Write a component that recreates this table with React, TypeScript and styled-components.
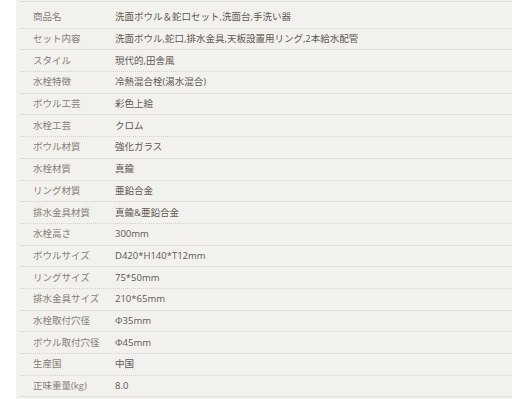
import React from "react";
import styled, { createGlobalStyle } from "styled-components";

const specs: [string, string][] = [
  ["商品名", "洗面ボウル＆蛇口セット,洗面台,手洗い器"],
  ["セット内容", "洗面ボウル,蛇口,排水金具,天板設置用リング,2本給水配管"],
  ["スタイル", "現代的,田舎風"],
  ["水栓特徴", "冷熱混合栓(湯水混合)"],
  ["ボウル工芸", "彩色上絵"],
  ["水栓工芸", "クロム"],
  ["ボウル材質", "強化ガラス"],
  ["水栓材質", "真鍮"],
  ["リング材質", "亜鉛合金"],
  ["排水金具材質", "真鍮&亜鉛合金"],
  ["水栓高さ", "300mm"],
  ["ボウルサイズ", "D420*H140*T12mm"],
  ["リングサイズ", "75*50mm"],
  ["排水金具サイズ", "210*65mm"],
  ["水栓取付穴径", "Φ35mm"],
  ["ボウル取付穴径", "Φ45mm"],
  ["生産国", "中国"],
  ["正味重量(kg)", "8.0"],
];

const GlobalStyle = createGlobalStyle`
  html, body {
    margin: 0;
    padding: 0;
    background: #ffffff;
  }
  body {
    font-family: "Open Sans", "Noto Sans CJK JP", sans-serif;
  }
`;

const Page = styled.div`
  height: 399px;
  overflow: hidden;
  padding-left: 16px;
`;

const Panel = styled.div`
  background: #f3f1ed;
  height: 100%;
  padding: 1px 0 0 4px;
`;

const SpecList = styled.dl`
  margin: 0;
  padding-top: 5px;
  border-top: 1px dotted #d3cfc9;
`;

const Row = styled.div`
  display: grid;
  grid-template-columns: 82px 1fr;
  align-items: center;
  height: 21.7px;
  box-sizing: border-box;
  padding-left: 13px;
  border-bottom: 1px dotted #d3cfc9;
  font-size: 9.5px;
  line-height: 12px;
  white-space: nowrap;
`;

const Label = styled.dt`
  margin: 0;
  color: #847f79;
`;

const Value = styled.dd`
  margin: 0;
  color: #5d5853;
`;

export default function App() {
  return (
    <>
      <GlobalStyle />
      <Page>
        <Panel>
          <SpecList>
            {specs.map(([label, value]) => (
              <Row key={label}>
                <Label>{label}</Label>
                <Value>{value}</Value>
              </Row>
            ))}
          </SpecList>
        </Panel>
      </Page>
    </>
  );
}
